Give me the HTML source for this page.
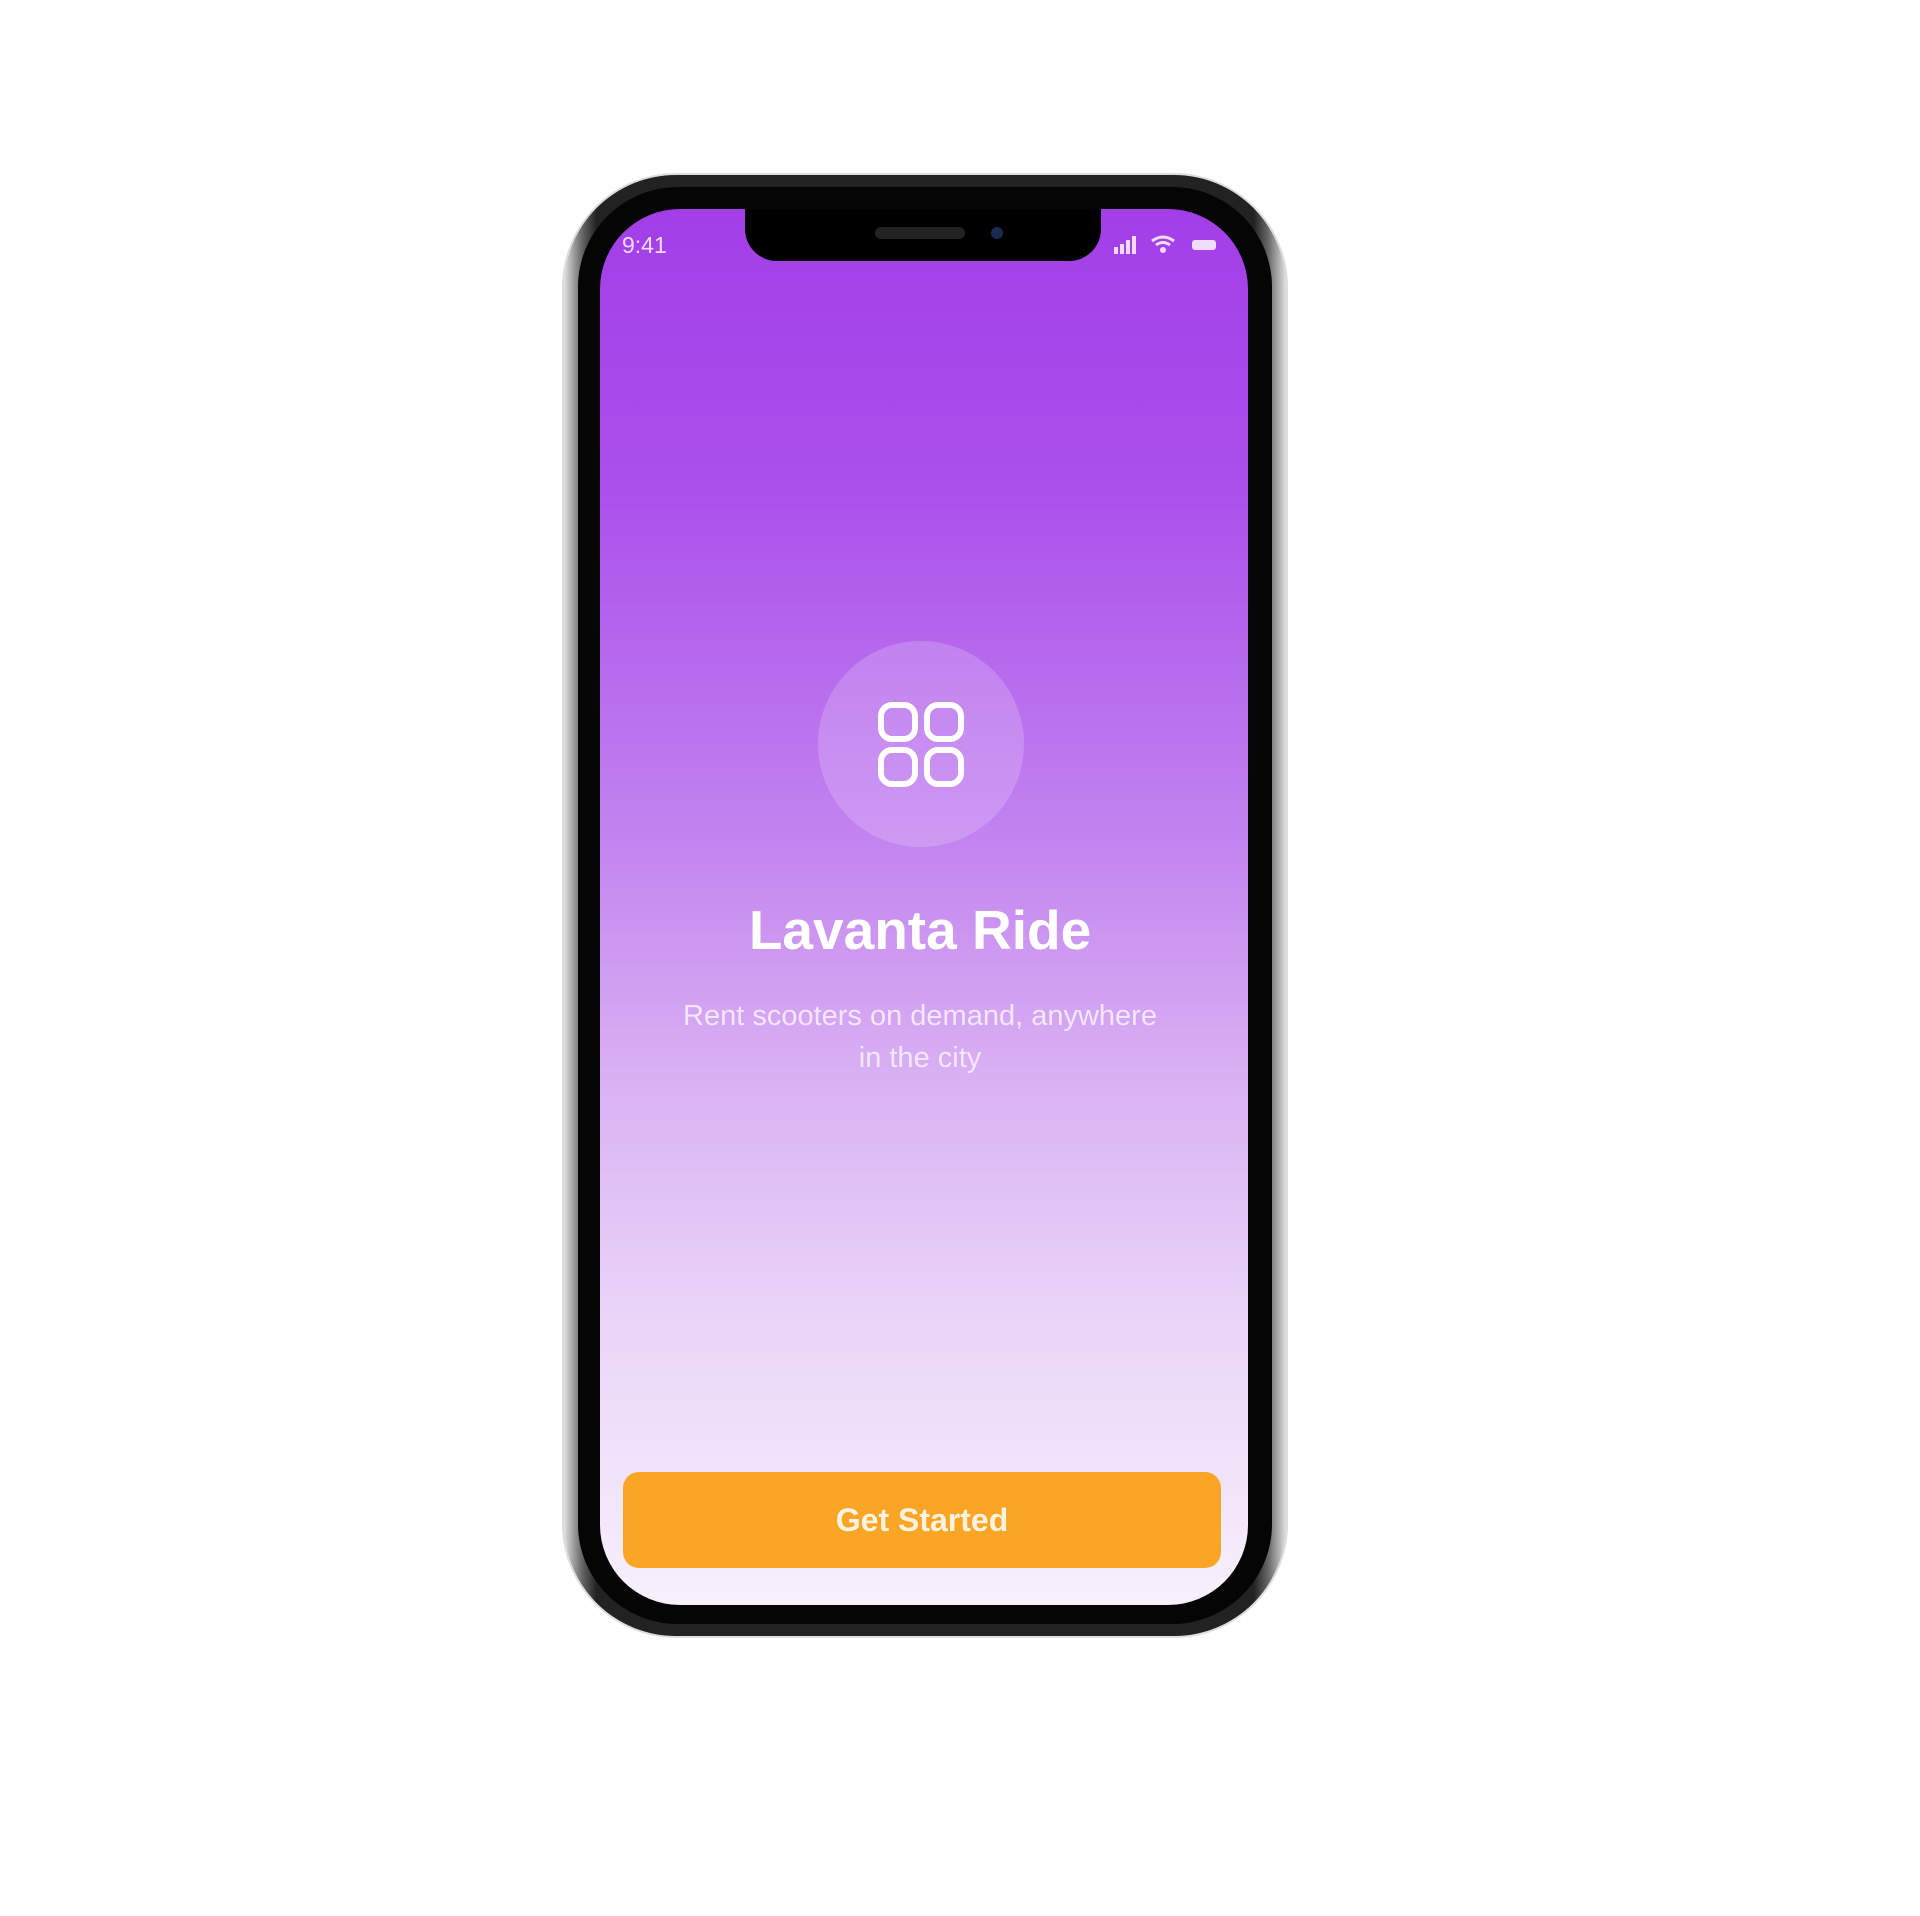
<!DOCTYPE html>
<html><head><style>
html,body{margin:0;padding:0;background:#fff;width:1920px;height:1916px;overflow:hidden;font-family:"Liberation Sans",sans-serif}
.outer{position:absolute;left:564px;top:175px;width:722px;height:1461px;border-radius:112px;background:linear-gradient(90deg,#e0e0e0,#666 2.5%,#222 4.5%,#222 95.5%,#666 97.5%,#e0e0e0);box-shadow:0 0 0 2px #ddd}
.bez{position:absolute;left:578px;top:187px;width:694px;height:1437px;border-radius:100px;background:#050505}
.screen{position:absolute;left:600px;top:209px;width:648px;height:1396px;border-radius:80px;overflow:hidden;background:linear-gradient(180deg,#a33ee8 0%,#ab50eb 20%,#c283ef 45%,#d9b0f3 62%,#ead6f8 80%,#f7f0fc 100%)}
.notch{position:absolute;left:145px;top:0;width:356px;height:52px;background:#000;border-radius:0 0 32px 32px}
.spk{position:absolute;left:130px;top:18px;width:90px;height:12px;border-radius:6px;background:#222}
.cam{position:absolute;left:246px;top:18px;width:12px;height:12px;border-radius:50%;background:#1a2a50}
.time{position:absolute;left:22px;top:23px;color:#f0dcff;font-size:23px}
.circle{position:absolute;left:218px;top:432px;width:206px;height:206px;border-radius:50%;background:rgba(255,255,255,0.18)}
.title{position:absolute;left:-6px;width:652px;top:689px;text-align:center;color:#fff;font-weight:bold;font-size:55px}
.sub{position:absolute;left:-6px;width:652px;top:786px;text-align:center;color:#f3e6fb;font-size:29px;line-height:42px}
.btn{position:absolute;left:23px;top:1263px;width:598px;height:96px;border-radius:16px;background:#fba526;color:#fff3e0;font-weight:bold;font-size:32px;text-align:center;line-height:96px}
</style></head><body>
<div class="outer"></div><div class="bez"></div>
<div class="screen">
<div class="notch"><div class="spk"></div><div class="cam"></div></div>
<div class="time">9:41</div>
<svg style="position:absolute;left:514px;top:24px" width="110" height="24" viewBox="0 0 110 24">
<rect x="0" y="14" width="4" height="7" fill="#f0dcff"/><rect x="6" y="11" width="4" height="10" fill="#f0dcff"/><rect x="12" y="7" width="4" height="14" fill="#f0dcff"/><rect x="18" y="3" width="4" height="18" fill="#f0dcff"/>
<path d="M38 8 Q49 0 60 8 M42 12 Q49 7 56 12" stroke="#f0dcff" stroke-width="3" fill="none"/><circle cx="49" cy="17" r="3" fill="#f0dcff"/>
<rect x="78" y="7" width="24" height="10" rx="3" fill="#f0dcff"/>
</svg>
<div class="circle"></div>
<svg style="position:absolute;left:276px;top:491px" width="90" height="90" viewBox="0 0 90 90">
<g fill="none" stroke="#fff" stroke-width="6"><rect x="5" y="5" width="34" height="34" rx="11"/><rect x="51" y="5" width="34" height="34" rx="11"/><rect x="5" y="50" width="34" height="34" rx="11"/><rect x="51" y="50" width="34" height="34" rx="11"/></g>
</svg>
<div class="title">Lavanta Ride</div>
<div class="sub">Rent scooters on demand, anywhere<br>in the city</div>
<div class="btn">Get Started</div>
</div>
</body></html>
